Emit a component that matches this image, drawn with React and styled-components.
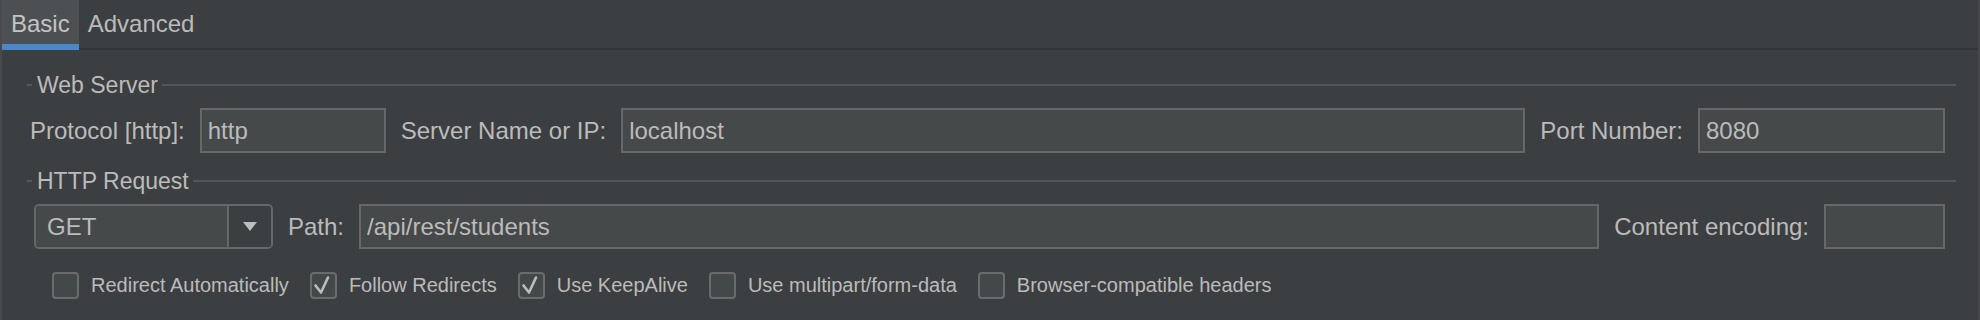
import React from "react"
import styled, { createGlobalStyle } from 'styled-components'

const GlobalStyle = createGlobalStyle`
    body {
        margin: 0;
        background: #3c3f41;
    }
`

const Panel = styled.div`
    width: 1980px;
    height: 320px;
    box-sizing: border-box;
    background: #3c3f41;
    border-left: 2px solid #47494c;
    border-right: 2px solid #47494c;
    font-family: "Liberation Sans", Arial, sans-serif;
    color: #bbbbbb;
    overflow: hidden;
`

const TabStrip = styled.div`
    display: flex;
    height: 48px;
    border-bottom: 2px solid #323436;
`

const Tab = styled.div`
    height: 50px;
    margin-bottom: -2px;
    padding: 0 9px;
    line-height: 48px;
    font-size: 24px;
    color: ${props => props.active ? '#c4c4c4' : '#bbbbbb'};
    background: ${props => props.active ? '#4c5052' : 'transparent'};
    box-shadow: ${props => props.active ? 'inset 0 -6px 0 #4a88c7' : 'none'};
`

const Body = styled.div`
    display: flex;
    flex-direction: column;
    padding: 21px 22px 0 25px;
`

const SectionTitle = styled.div`
    display: flex;
    align-items: center;
    height: 28px;
    font-size: 23px;
    margin-bottom: 9px;

    &::before {
        content: "";
        width: 5px;
        height: 2px;
        background: #545658;
        margin-right: 5px;
    }

    &::after {
        content: "";
        flex: 1;
        height: 2px;
        background: #545658;
        margin-left: 4px;
    }
`

const Row = styled.div`
    display: flex;
    align-items: center;
    gap: 15px;
    height: 45px;
    padding-left: ${props => props.indent}px;
    padding-right: 11px;
    margin-bottom: ${props => props.below}px;
`

const Label = styled.span`
    font-size: 24px;
    white-space: nowrap;
`

const Field = styled.input`
    box-sizing: border-box;
    height: 45px;
    width: ${props => props.width ? props.width + 'px' : 'auto'};
    flex: ${props => props.width ? 'none' : '1'};
    min-width: 0;
    margin: 0;
    padding: 0 6px;
    border: 2px solid #676767;
    background: #45494a;
    color: #bbbbbb;
    font-family: "Liberation Sans", Arial, sans-serif;
    font-size: 24px;
    outline: none;
`

const Combo = styled.div`
    display: flex;
    box-sizing: border-box;
    width: 239px;
    height: 45px;
    border: 2px solid #676767;
    border-radius: 5px;
    overflow: hidden;
`

const ComboValue = styled.div`
    flex: 1;
    padding-left: 11px;
    background: #45494a;
    font-size: 24px;
    line-height: 41px;
`

const ComboArrow = styled.div`
    width: 42px;
    border-left: 2px solid #676767;
    background: #3c3f41;
    display: flex;
    align-items: center;
    justify-content: center;

    &::after {
        content: "";
        border-left: 7px solid transparent;
        border-right: 7px solid transparent;
        border-top: 9px solid #bdbdbd;
    }
`

const CheckRow = styled.div`
    display: flex;
    align-items: center;
    gap: 21px;
    padding-left: 25px;
`

const CheckItem = styled.label`
    display: flex;
    align-items: center;
    gap: 12px;
    font-size: 20px;
    white-space: nowrap;
`

const Box = styled.span`
    box-sizing: border-box;
    width: 27px;
    height: 27px;
    border: 2px solid #6b6b6b;
    border-radius: 4px;
    background: #43494a;
    display: flex;
    align-items: center;
    justify-content: center;
`

function CheckBox({checked, label}){
    return (
        <CheckItem>
            <Box>
                {checked && (
                    <svg width="23" height="23" viewBox="0 0 23 23">
                        <path d="M3.5 11.5 L9 18.5 L16 3.5" fill="none" stroke="#bdbdbd" strokeWidth="2.6" strokeLinejoin="round" strokeLinecap="round" />
                    </svg>
                )}
            </Box>
            {label}
        </CheckItem>
    )
}

function App(){
    return (
        <Panel>
            <GlobalStyle />
            <TabStrip>
                <Tab active>Basic</Tab>
                <Tab>Advanced</Tab>
            </TabStrip>

            <Body>
                <SectionTitle>Web Server</SectionTitle>
                <Row indent={3} below={14}>
                    <Label>Protocol [http]:</Label>
                    <Field width={186} defaultValue="http" readOnly />
                    <Label>Server Name or IP:</Label>
                    <Field defaultValue="localhost" readOnly />
                    <Label>Port Number:</Label>
                    <Field width={247} defaultValue="8080" readOnly />
                </Row>

                <SectionTitle>HTTP Request</SectionTitle>
                <Row indent={7} below={23}>
                    <Combo>
                        <ComboValue>GET</ComboValue>
                        <ComboArrow />
                    </Combo>
                    <Label>Path:</Label>
                    <Field defaultValue="/api/rest/students" readOnly />
                    <Label>Content encoding:</Label>
                    <Field width={121} defaultValue="" readOnly />
                </Row>

                <CheckRow>
                    <CheckBox label="Redirect Automatically" />
                    <CheckBox checked label="Follow Redirects" />
                    <CheckBox checked label="Use KeepAlive" />
                    <CheckBox label="Use multipart/form-data" />
                    <CheckBox label="Browser-compatible headers" />
                </CheckRow>
            </Body>
        </Panel>
    )
}

export default App;
